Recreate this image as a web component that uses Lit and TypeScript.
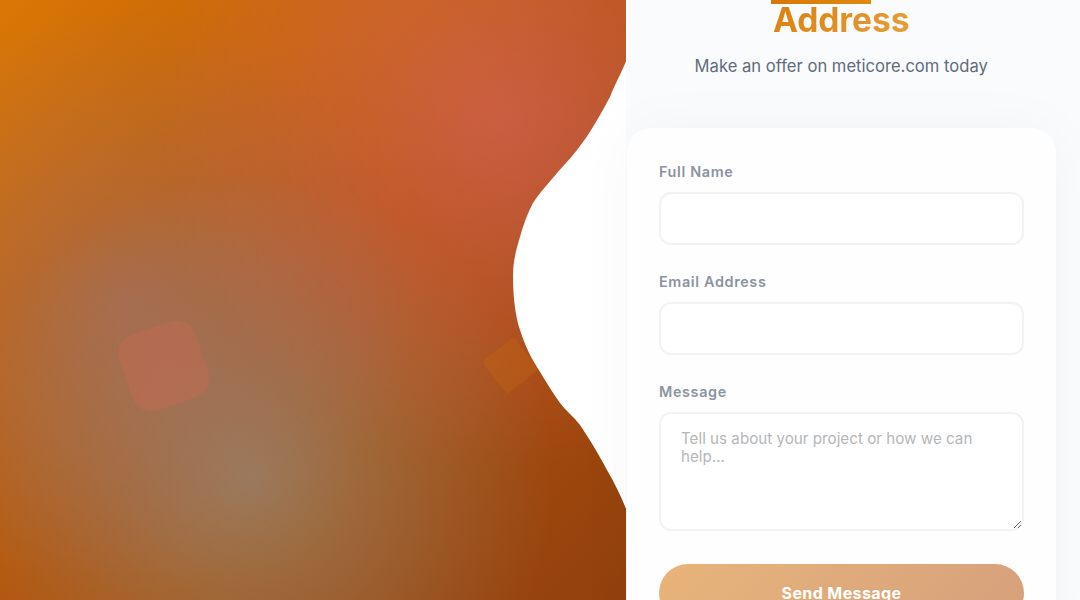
import { LitElement, html, css, svg } from "lit";
import { customElement } from "lit/decorators.js";

@customElement("app-root")
export class AppRoot extends LitElement {
  static styles = css`
    :host {
      display: block;
      height: 600px;
      overflow: hidden;
      font-family: Inter, "Liberation Sans", sans-serif;
      background: #fff;
    }
    * { box-sizing: border-box; }
    .page { display: flex; height: 600px; overflow: hidden; position: relative; }
    .hero {
      width: 58%;
      flex: none;
      position: relative;
      background: linear-gradient(135deg, #d97706 0%, #b45309 50%, #92400e 100%);
      overflow: hidden;
    }
    .glow {
      position: absolute;
      inset: 0;
      background:
        radial-gradient(circle at 20% 50%, rgba(120, 119, 198, 0.3), transparent 50%),
        radial-gradient(circle at 80% 20%, rgba(255, 119, 198, 0.3), transparent 50%),
        radial-gradient(circle at 40% 80%, rgba(120, 219, 255, 0.3), transparent 50%);
    }
    .shape-a {
      position: absolute;
      left: 124px; top: 326px;
      width: 80px; height: 80px;
      border-radius: 20px;
      background: rgba(239, 100, 80, 0.22);
      transform: rotate(-19deg);
    }
    .shape-b {
      position: absolute;
      left: 489.5px; top: 344.5px;
      width: 41px; height: 41px;
      border-radius: 4px;
      background: rgba(217, 119, 6, 0.2);
      transform: rotate(52deg);
    }
    .wave { position: absolute; left: 0; top: 0; width: 626px; height: 600px; }
    .side {
      flex: 1;
      min-width: 0;
      background: #fafbfd;
      padding-right: 24px;
    }
    .head {
      margin-top: -2px;
      display: flex;
      flex-direction: column;
      align-items: center;
    }
    .bar {
      width: 100px;
      height: 6px;
      margin-left: -40px;
      background: linear-gradient(90deg, #d97706, #e08a12);
    }
    .title {
      font-size: 33.6px;
      line-height: 32px;
      font-weight: 700;
      letter-spacing: -0.1px;
      margin: 0;
      background: linear-gradient(135deg, #dc7f0c, #e5a03c);
      -webkit-background-clip: text;
      background-clip: text;
      color: transparent;
    }
    .sub {
      margin: 18px 0 0;
      font-size: 16.6px;
      line-height: 24px;
      color: #5f6b7a;
    }
    .card {
      position: relative;
      margin: 50px 0 0 0.6px;
      background: #fefefe;
      border-radius: 24px;
      padding: 32px;
      box-shadow: 0 0 60px rgba(0, 0, 0, 0.035);
    }
    label {
      display: block;
      font-size: 14.4px;
      line-height: 24px;
      font-weight: 600;
      letter-spacing: 0.65px;
      color: #8b93a0;
      margin-bottom: 8px;
    }
    .field { margin-bottom: 25px; }
    input, textarea {
      display: block;
      width: 100%;
      font: 400 15.2px/18px Inter, "Liberation Sans", sans-serif;
      border: 2px solid #f1f2f4;
      border-radius: 12px;
      background: #fff;
      padding: 16px 20px;
      outline: none;
    }
    input { height: 53px; }
    textarea { height: 119px; }
    textarea::placeholder { color: #b4b6b9; opacity: 1; }
    .send {
      display: block;
      width: 100%;
      height: 58px;
      margin-top: 33px;
      border: 0;
      border-radius: 29px;
      background: linear-gradient(135deg, #e8b47a, #d5a07c);
      color: #fff;
      font: 700 16px/24px Inter, "Liberation Sans", sans-serif;
      letter-spacing: 0.4px;
      padding: 0;
    }
  `;

  private wavePath() {
    return svg`<path fill="#fff" d="M626.5 58
      L626.5 60
      C 620 76 614 86 610 97
      C 600 115 590 134 577 150
      C 570 159 563 166 557 173
      C 548 184 540 192 533 203
      C 527 214 523 226 520 237
      C 516 250 513 262 513 276
      C 513 295 515 315 520 330
      C 525 345 530 356 537 367
      C 545 380 552 392 560 403
      C 566 411 574 417 580 425
      C 590 440 598 453 607 470
      C 614 482 621 496 626.5 510
      Z"/>`;
  }

  render() {
    return html`
      <div class="page">
        <div class="hero">
          <div class="glow"></div>
          <div class="shape-a"></div>
          <div class="shape-b"></div>
          <svg class="wave" viewBox="0 0 626 600">${this.wavePath()}</svg>
        </div>
        <div class="side">
          <div class="head">
            <div class="bar"></div>
            <h1 class="title">Address</h1>
            <p class="sub">Make an offer on meticore.com today</p>
          </div>
          <form class="card">
            <div class="field">
              <label>Full Name</label>
              <input type="text" />
            </div>
            <div class="field">
              <label>Email Address</label>
              <input type="email" />
            </div>
            <div class="field">
              <label>Message</label>
              <textarea placeholder="Tell us about your project or how we can help..."></textarea>
            </div>
            <button class="send" type="button">Send Message</button>
          </form>
        </div>
      </div>
    `;
  }
}
